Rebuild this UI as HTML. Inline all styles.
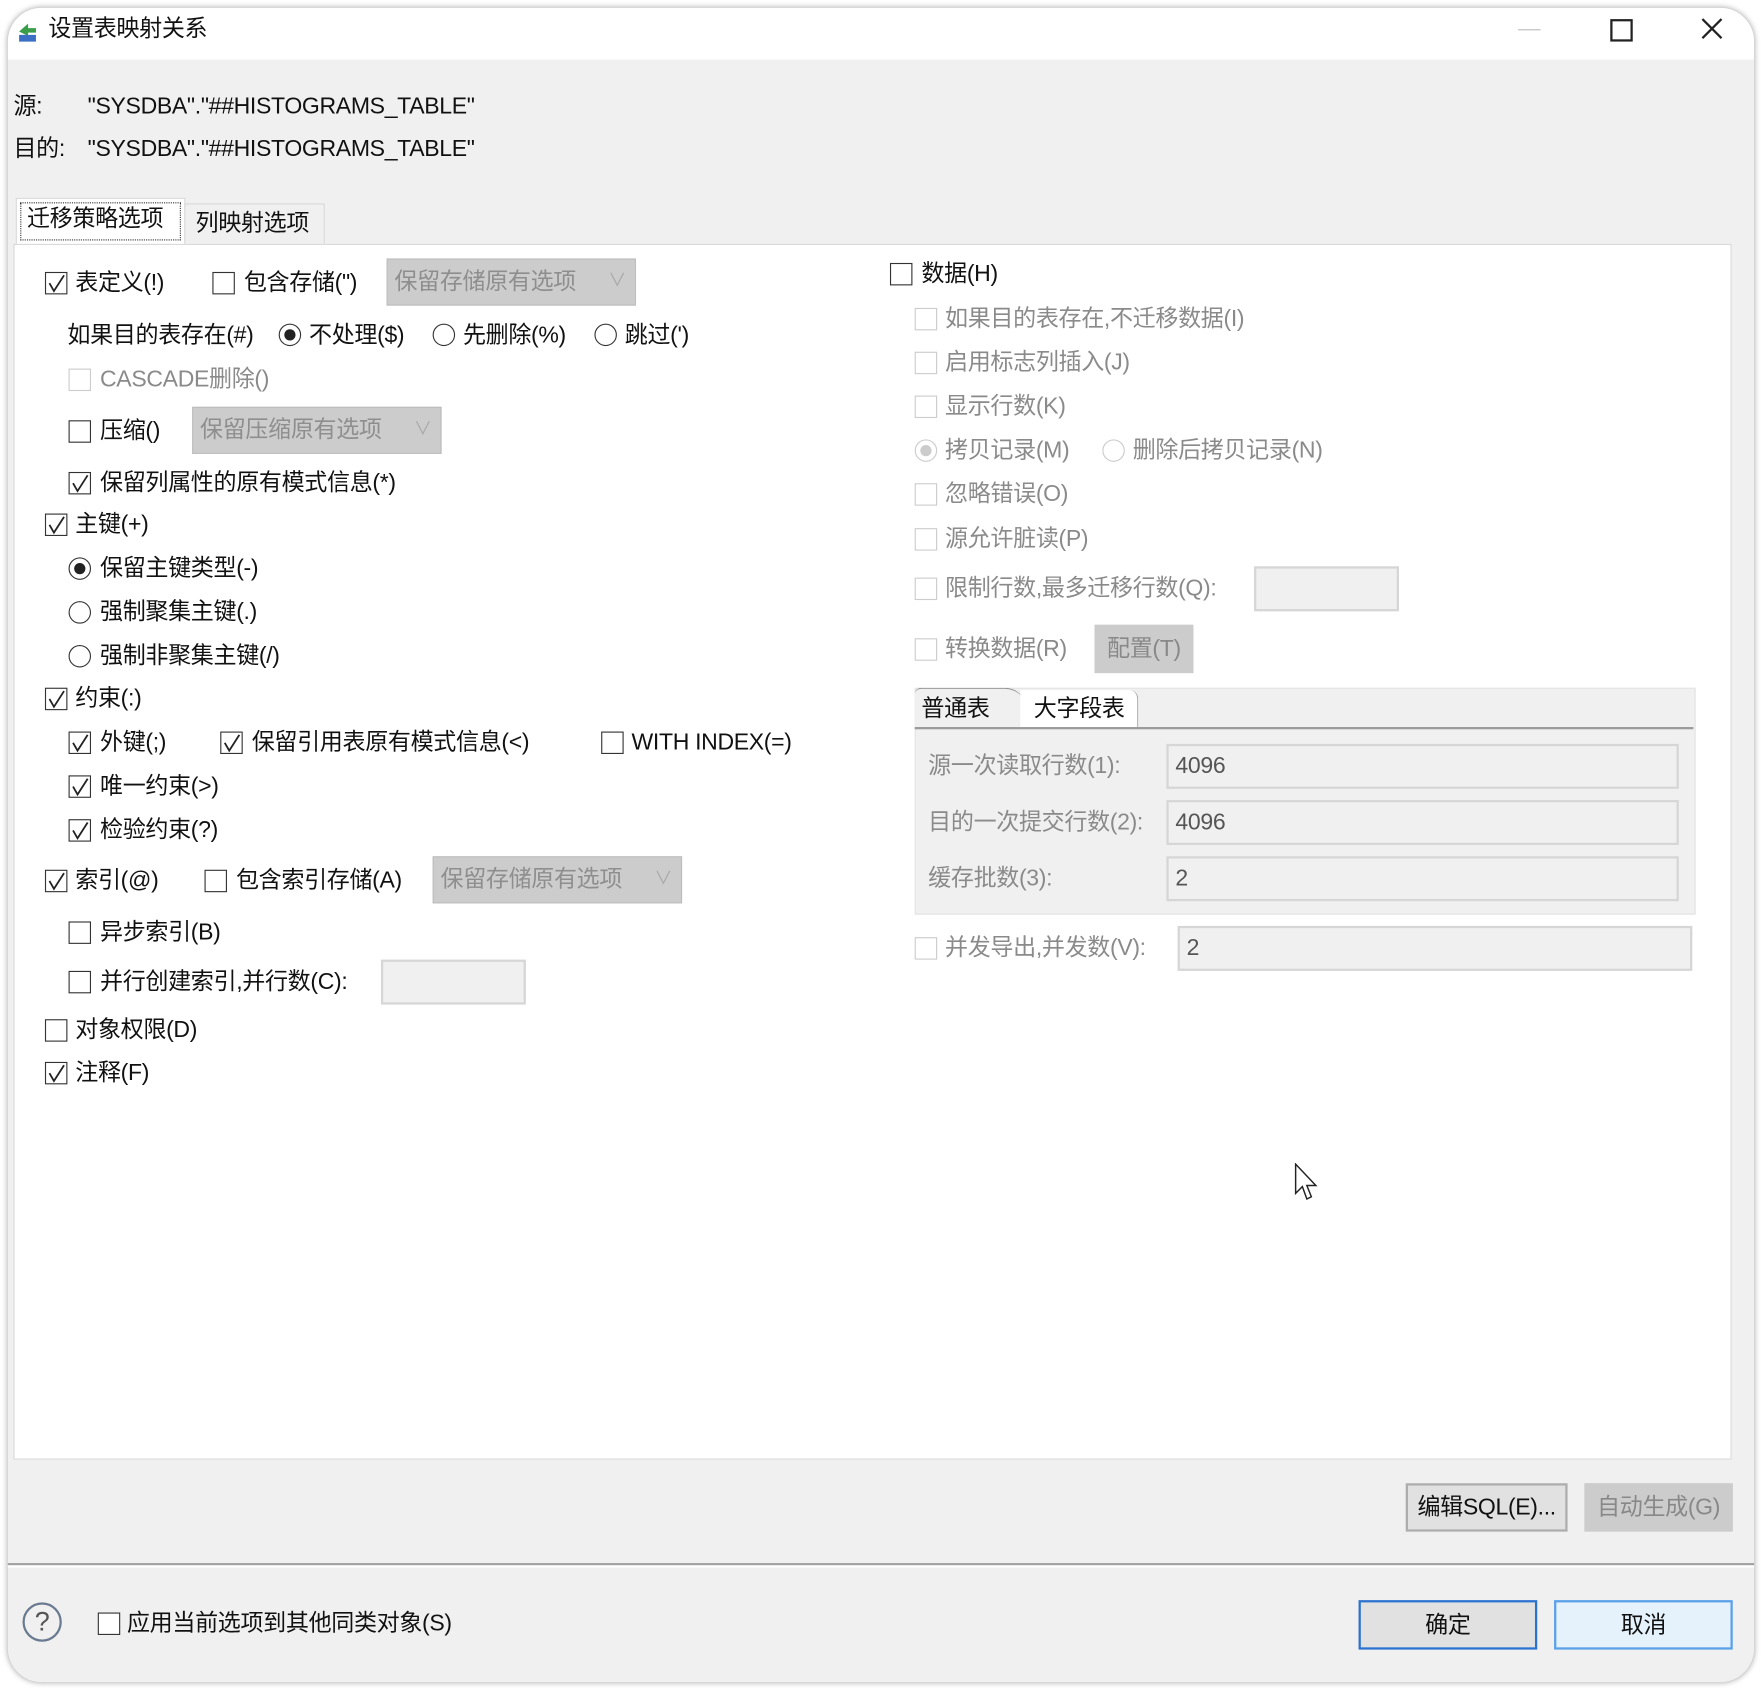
<!DOCTYPE html>
<html><head><meta charset="utf-8">
<style>
html,body{margin:0;padding:0;background:#fff;width:1762px;height:1690px;overflow:hidden}
#s{position:absolute;left:0;top:0;width:1568px;height:1504px;transform:scale(1.1237);transform-origin:0 0;font-family:"Liberation Sans","Noto Sans CJK SC",sans-serif;font-size:20.5px;line-height:24px;letter-spacing:-0.3px;color:#111}
.a{position:absolute;white-space:nowrap}
.win{position:absolute;left:7px;top:7px;width:1554px;height:1490px;border-radius:30px;background:#f0f0f0;box-shadow:0 0 5px rgba(0,0,0,.35);overflow:hidden}
.tb{position:absolute;left:0;top:0;width:100%;height:46px;background:#fff}
.cb{position:absolute;width:18px;height:18px;border:1.5px solid #333;background:#fff}
.cb.d{border-color:#ccc}
.cb svg{position:absolute;left:1px;top:1px}
.rb{position:absolute;width:18px;height:18px;border:1.5px solid #333;border-radius:50%;background:#fff}
.rb.d{border-color:#ccc}
.rb i{position:absolute;left:4px;top:4px;width:10px;height:10px;border-radius:50%;background:#222}
.rb.d i{background:#ccc}
.g{color:#8a8a8a}
.combo{position:absolute;height:42px;background:#ccc;border:1px solid #bdbdbd;color:#8e8e8e;box-sizing:border-box;padding:8px 6px}
.combo b{position:absolute;right:8px;top:8px;font-weight:normal;color:#aaa;font-size:16px}
.fld{position:absolute;background:#f0f0f0;border:2px solid #d6d6d6;box-sizing:border-box;padding:6px 6px;color:#555}
.btn{position:absolute;box-sizing:border-box;text-align:center;border:2px solid #adadad;background:#e1e1e1}
</style></head><body><div id="s">
<div class="win">
 <div class="tb"></div>
</div>
<svg class="a" style="left:14px;top:17px" width="22" height="22"><path d="M3 11 L11 4 L11 8 L18 8 L18 12 L11 12 L11 15 Z" fill="#3a9d4a"/><path d="M3 14 L18 14 L18 20 L3 20 Z" fill="#3b6fc4"/></svg>
<div class="a" style="left:43px;top:14px">设置表映射关系</div>
<div class="a" style="left:1351px;top:26px;width:20px;height:1px;background:#bbb"></div>
<div class="a" style="left:1433px;top:17px;width:16px;height:16px;border:2px solid #222"></div>
<svg class="a" style="left:1513px;top:15px" width="21" height="21"><path d="M2 2L19 19M19 2L2 19" stroke="#222" stroke-width="2"/></svg>

<div class="a" style="left:12px;top:83px">源:</div>
<div class="a" style="left:78px;top:83px">"SYSDBA"."##HISTOGRAMS_TABLE"</div>
<div class="a" style="left:12px;top:121px">目的:</div>
<div class="a" style="left:78px;top:121px">"SYSDBA"."##HISTOGRAMS_TABLE"</div>

<div class="a" style="left:14px;top:176px;width:149px;height:42px;background:#fff;border:1px solid #d9d9d9;border-bottom:none"></div>
<div class="a" style="left:18px;top:180px;width:141px;height:32px;border:1px dotted #333"></div>
<div class="a" style="left:24px;top:183px">迁移策略选项</div>
<div class="a" style="left:164px;top:181px;width:123px;height:36px;background:#f0f0f0;border:1px solid #d9d9d9;border-bottom:none"></div>
<div class="a" style="left:174px;top:187px">列映射选项</div>
<div class="a" style="left:12px;top:217px;width:1527px;height:1080px;background:#fff;border:1px solid #d9d9d9"></div>

<div class="cb" style="left:40px;top:242px"><svg width="17" height="17"><path d="M2 8L6 15L15 1" stroke="#222" stroke-width="1.6" fill="none"/></svg></div>
<div class="a" style="left:67px;top:240px">表定义(!)</div>
<div class="cb" style="left:189px;top:242px"></div>
<div class="a" style="left:217px;top:240px">包含存储(")</div>
<div class="combo" style="left:344px;top:230px;width:222px">保留存储原有选项<b>∨</b></div>

<div class="a" style="left:60px;top:287px">如果目的表存在(#)</div>
<div class="rb" style="left:248px;top:288px"><i></i></div>
<div class="a" style="left:275px;top:287px">不处理($)</div>
<div class="rb" style="left:385px;top:288px"></div>
<div class="a" style="left:412px;top:287px">先删除(%)</div>
<div class="rb" style="left:529px;top:288px"></div>
<div class="a" style="left:556px;top:287px">跳过(')</div>

<div class="cb d" style="left:61px;top:328px"></div>
<div class="a g" style="left:89px;top:326px">CASCADE删除()</div>
<div class="cb" style="left:61px;top:374px"></div>
<div class="a" style="left:89px;top:372px">压缩()</div>
<div class="combo" style="left:171px;top:362px;width:222px">保留压缩原有选项<b>∨</b></div>
<div class="cb" style="left:61px;top:420px"><svg width="17" height="17"><path d="M2 8L6 15L15 1" stroke="#222" stroke-width="1.6" fill="none"/></svg></div>
<div class="a" style="left:89px;top:418px">保留列属性的原有模式信息(*)</div>

<div class="cb" style="left:40px;top:457px"><svg width="17" height="17"><path d="M2 8L6 15L15 1" stroke="#222" stroke-width="1.6" fill="none"/></svg></div>
<div class="a" style="left:67px;top:455px">主键(+)</div>
<div class="rb" style="left:61px;top:496px"><i></i></div>
<div class="a" style="left:89px;top:494px">保留主键类型(-)</div>
<div class="rb" style="left:61px;top:535px"></div>
<div class="a" style="left:89px;top:533px">强制聚集主键(.)</div>
<div class="rb" style="left:61px;top:574px"></div>
<div class="a" style="left:89px;top:572px">强制非聚集主键(/)</div>

<div class="cb" style="left:40px;top:612px"><svg width="17" height="17"><path d="M2 8L6 15L15 1" stroke="#222" stroke-width="1.6" fill="none"/></svg></div>
<div class="a" style="left:67px;top:610px">约束(:)</div>
<div class="cb" style="left:61px;top:651px"><svg width="17" height="17"><path d="M2 8L6 15L15 1" stroke="#222" stroke-width="1.6" fill="none"/></svg></div>
<div class="a" style="left:89px;top:649px">外键(;)</div>
<div class="cb" style="left:196px;top:651px"><svg width="17" height="17"><path d="M2 8L6 15L15 1" stroke="#222" stroke-width="1.6" fill="none"/></svg></div>
<div class="a" style="left:224px;top:649px">保留引用表原有模式信息(&lt;)</div>
<div class="cb" style="left:535px;top:651px"></div>
<div class="a" style="left:562px;top:649px">WITH INDEX(=)</div>
<div class="cb" style="left:61px;top:690px"><svg width="17" height="17"><path d="M2 8L6 15L15 1" stroke="#222" stroke-width="1.6" fill="none"/></svg></div>
<div class="a" style="left:89px;top:688px">唯一约束(&gt;)</div>
<div class="cb" style="left:61px;top:729px"><svg width="17" height="17"><path d="M2 8L6 15L15 1" stroke="#222" stroke-width="1.6" fill="none"/></svg></div>
<div class="a" style="left:89px;top:727px">检验约束(?)</div>

<div class="cb" style="left:40px;top:774px"><svg width="17" height="17"><path d="M2 8L6 15L15 1" stroke="#222" stroke-width="1.6" fill="none"/></svg></div>
<div class="a" style="left:67px;top:772px">索引(@)</div>
<div class="cb" style="left:182px;top:774px"></div>
<div class="a" style="left:210px;top:772px">包含索引存储(A)</div>
<div class="combo" style="left:385px;top:762px;width:222px">保留存储原有选项<b>∨</b></div>
<div class="cb" style="left:61px;top:820px"></div>
<div class="a" style="left:89px;top:818px">异步索引(B)</div>
<div class="cb" style="left:61px;top:864px"></div>
<div class="a" style="left:89px;top:862px">并行创建索引,并行数(C):</div>
<div class="fld" style="left:339px;top:854px;width:129px;height:40px"></div>
<div class="cb" style="left:40px;top:907px"></div>
<div class="a" style="left:67px;top:905px">对象权限(D)</div>
<div class="cb" style="left:40px;top:945px"><svg width="17" height="17"><path d="M2 8L6 15L15 1" stroke="#222" stroke-width="1.6" fill="none"/></svg></div>
<div class="a" style="left:67px;top:943px">注释(F)</div>

<div class="cb" style="left:792px;top:234px"></div>
<div class="a" style="left:820px;top:232px">数据(H)</div>
<div class="cb d" style="left:814px;top:274px"></div><div class="a g" style="left:841px;top:272px">如果目的表存在,不迁移数据(I)</div>
<div class="cb d" style="left:814px;top:313px"></div><div class="a g" style="left:841px;top:311px">启用标志列插入(J)</div>
<div class="cb d" style="left:814px;top:352px"></div><div class="a g" style="left:841px;top:350px">显示行数(K)</div>
<div class="rb d" style="left:814px;top:391px"><i></i></div><div class="a g" style="left:841px;top:389px">拷贝记录(M)</div>
<div class="rb d" style="left:981px;top:391px"></div><div class="a g" style="left:1008px;top:389px">删除后拷贝记录(N)</div>
<div class="cb d" style="left:814px;top:430px"></div><div class="a g" style="left:841px;top:428px">忽略错误(O)</div>
<div class="cb d" style="left:814px;top:470px"></div><div class="a g" style="left:841px;top:468px">源允许脏读(P)</div>
<div class="cb d" style="left:814px;top:514px"></div><div class="a g" style="left:841px;top:512px">限制行数,最多迁移行数(Q):</div>
<div class="fld" style="left:1116px;top:504px;width:129px;height:40px"></div>
<div class="cb d" style="left:814px;top:568px"></div><div class="a g" style="left:841px;top:566px">转换数据(R)</div>
<div class="btn" style="left:974px;top:556px;width:88px;height:43px;background:#ccc;border-color:#ccc;color:#888;padding-top:8px">配置(T)</div>

<div class="a" style="left:814px;top:612px;width:693px;height:200px;background:#f0f0f0;border:1px solid #e4e4e4"></div>
<div class="a" style="left:814px;top:612px;width:100px;height:36px;background:#f0f0f0;border-top:1px solid #999;border-radius:6px 20px 0 0"></div>
<div class="a" style="left:908px;top:614px;width:104px;height:34px;background:#fff;border-right:1px solid #aaa;border-radius:0 8px 0 0"></div>
<div class="a" style="left:814px;top:647px;width:693px;height:2px;background:#9a9a9a"></div>
<div class="a" style="left:820px;top:619px">普通表</div>
<div class="a" style="left:920px;top:619px">大字段表</div>
<div class="a g" style="left:826px;top:670px">源一次读取行数(1):</div>
<div class="fld" style="left:1038px;top:662px;width:456px;height:40px">4096</div>
<div class="a g" style="left:826px;top:720px">目的一次提交行数(2):</div>
<div class="fld" style="left:1038px;top:712px;width:456px;height:40px">4096</div>
<div class="a g" style="left:826px;top:770px">缓存批数(3):</div>
<div class="fld" style="left:1038px;top:762px;width:456px;height:40px">2</div>
<div class="cb d" style="left:814px;top:834px"></div><div class="a g" style="left:841px;top:832px">并发导出,并发数(V):</div>
<div class="fld" style="left:1048px;top:824px;width:458px;height:40px">2</div>

<svg class="a" style="left:1152px;top:1035px" width="24" height="36"><path d="M1 1L1 27L7 21L11 32L15 30L11 20L19 20Z" fill="#fff" stroke="#222" stroke-width="1.3"/></svg>

<div class="btn" style="left:1251px;top:1320px;width:144px;height:43px;padding-top:8px">编辑SQL(E)...</div>
<div class="btn" style="left:1410px;top:1320px;width:132px;height:43px;background:#ccc;border-color:#ccc;color:#888;padding-top:8px">自动生成(G)</div>
<div class="a" style="left:7px;top:1391px;width:1554px;height:2px;background:#a0a0a0"></div>
<div class="a" style="left:7px;top:1393px;width:1554px;height:2px;background:#fff"></div>

<div class="a" style="left:20px;top:1426px;width:31px;height:31px;border:2px solid #6a7a90;border-radius:50%;text-align:center;font-size:24px;line-height:31px;color:#555">?</div>
<div class="cb" style="left:87px;top:1435px"></div>
<div class="a" style="left:113px;top:1433px">应用当前选项到其他同类对象(S)</div>
<div class="btn" style="left:1209px;top:1424px;width:159px;height:44px;border-color:#2a72d0;padding-top:9px">确定</div>
<div class="btn" style="left:1383px;top:1424px;width:159px;height:44px;border-color:#58a0e8;background:#e5f1fb;padding-top:9px">取消</div>
</div></body></html>
